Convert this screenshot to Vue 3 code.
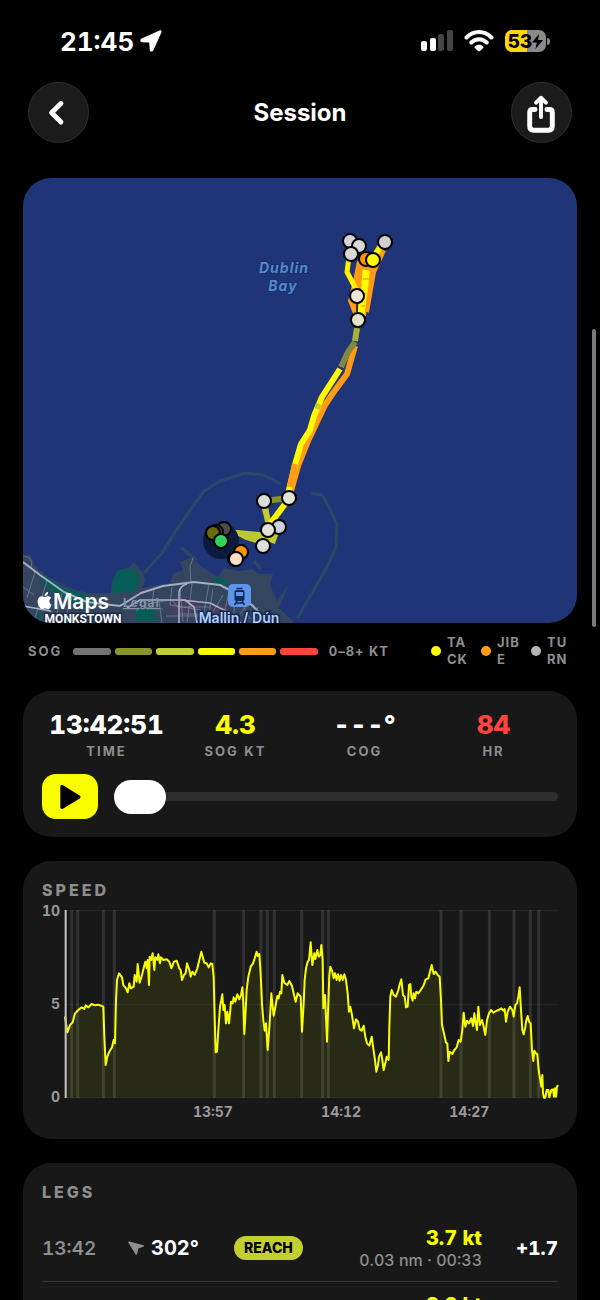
<template>
  <div class="screen">
    <div class="status-bar">
      <div class="clock">
        <span>21:45</span>
        <svg class="icon-location" viewBox="0 0 22 22">
          <path d="M19.600.4 1.600 8.600C-.4 9.600.1 12.200 2 12.300l6.700.2c.5 0 .6.2.6.7l.5 6.700c.2 2 2.800 2.200 3.600.3L21.500 2.300C22 .9 21-.2 19.600.4z" fill="#fff" />
        </svg>
      </div>
      <div class="indicators">
        <svg class="icon-signal" viewBox="0 0 32 22">
          <rect x="0" y="11" width="6" height="10" rx="2" fill="#fff" />
          <rect x="9" y="8" width="6" height="13" rx="2" fill="#fff" />
          <rect x="17" y="4" width="6" height="17" rx="2" fill="#454545" />
          <rect x="26" y="0" width="6" height="21" rx="2" fill="#454545" />
        </svg>
        <svg class="icon-wifi" viewBox="0 0 30 22">
          <path d="M2.500 7.500C9.500.3 20.500.3 27.500 7.500M7.300 12.500c4.400-4.300 11-4.300 15.400 0" fill="none" stroke="#fff" stroke-width="4" stroke-linecap="round" />
          <path d="M10.800 16.400c2.400-2.200 6-2.200 8.400 0 .5.5.5 1 0 1.500l-3.200 3.200c-.6.6-1.400.6-2 0l-3.200-3.200c-.5-.5-.5-1 0-1.500z" fill="#fff" />
        </svg>
        <div class="battery">
          <span class="battery-body">53<svg class="bolt" viewBox="0 0 11 15"><path d="M7 0 0 8.500h4.700L3.500 15 11 6H6z" /></svg></span>
          <span class="battery-cap"></span>
        </div>
      </div>
    </div>

    <header class="nav">
      <button class="round-btn" type="button" aria-label="Back">
        <svg viewBox="0 0 60 60">
          <path d="M32.500 20.800 23 30.200l9.500 9.500" fill="none" stroke="#fff" stroke-width="5" stroke-linecap="round" stroke-linejoin="round" />
        </svg>
      </button>
      <h1>Session</h1>
      <button class="round-btn" type="button" aria-label="Share">
        <svg viewBox="0 0 60 60" fill="none" stroke="#fff" stroke-width="5" stroke-linecap="round" stroke-linejoin="round">
          <path d="M23.500 27H21c-2 0-3 1-3 3v14c0 2.500 1.500 4 4 4h15c2.500 0 4-1.500 4-4V30c0-2-1-3-3-3h-2.500" />
          <path d="M29.500 34.500V17" stroke-width="4" />
          <path d="m24.500 20 5-5 5 5" stroke-width="4" />
        </svg>
      </button>
    </header>

    <main class="content">
      <svg class="map" viewBox="23 178 554 445">
        <rect x="23" y="178" width="554" height="445" fill="#1f3577" />
        <g class="pier">
          <path d="M144 573 162 553 177 529 193 506 204 491 220 481 245 473 263 475 281 484" />
          <path d="M311 493 322 495 329 507 337 524 336 547 327 567 312 593 297 619" />
          <path d="M181 547 196 560M254 561l7 8" />
        </g>
        <path d="M23 556l8-1 4 11 12 10 20 11 20 6h24l1-12 5-10 12-4 5-5 9 11 2 8-3 7 28-5 3-9 10-4-3-8 12-5 10 10 16 10 6-9 15 3 14-2 5 5h15l-3 11 7 16 12-17-10 24 14 13v20H23z" fill="#34455f" />
        <g fill="#075c58">
          <path d="M113 579l7-10 8 1 4-3 5 6 3 7-3 8-5 5-12-1-8 2z" />
          <path d="M42 574l20 13 25 8 8 5-4 6-20-4-22-13-8-8z" />
          <path d="M136 608h19v13h-19zM214 577l14 3v6l-14-4zM37 609l5 14h-5z" />
        </g>
        <path d="M166 600l20-6 16 10-3 12-24 2zM208 610l18-8 5 6-8 7-14 2z" fill="#453f5e" />
        <g fill="none" stroke="#8792ad" stroke-width="1" opacity=".6">
          <path d="M35 572 27 598M47 581 35 618M23 587l11 8M23 606l30 6M62 593l-7 28M72 597l-8 25M23 556c9 0 9 6 8 12M90 606l-3 17M154 589l-2 14 20-3 8 10M159 601l3 22M172 587l-2 18 31 5M145 607l18 2M191 583l-1-16 3-9M192 584l-5 39M179 607h31M209 584l-7 39M213 589l-5 32M223 595l-10 17M230 588l-7 30M236 592l-3 29M180 614h28M166 616h47M240 600l10 19M250 601l-10 13M258 607l-6 13M180 588l3 34M136 611l13-9" />
        </g>
        <g fill="none" stroke="#a4aec5" stroke-linejoin="round">
          <path d="M23 562 40 575 64 592 87 602 120 606 141 593 163 586 194 582 220 585 239 595 252 605 267 621" stroke-width="2" />
          <path d="M23 606l28 5M127 608l13-8h45l9 7 3 16M179 623v-31c1-5 4-7 8-8" stroke-width="1.600" />
          <path d="M181 600 210 603 230 613 241 623" stroke-width="1.400" />
        </g>

        <g class="track">
          <path d="M266 514 264 501 289 498" stroke="#8c912c" />
          <path d="M264 503 269 526" stroke="#c3cc30" />
          <path d="M288 500 270 524" stroke="#f8f500" />
          <path d="M232 531 264 534 273 538 264 544 245 538z" fill="#bdc92f" stroke="#bdc92f" stroke-width="3" />
          <path d="M276 532 272 543" stroke="#c3cc30" />
          <path d="M355 346 347 374 333 393 325 405 308 441 298 466 291 491" stroke="#ff9c13" />
          <path d="M357 328 355 341" stroke="#a7b13a" />
          <path d="M355 342 348 352 341 367" stroke="#7e8840" />
          <path d="M340 369 322 397 314 416 310 430 301 444 296 461 288 494" stroke="#fffb00" />
          <path d="M319 404l-2 5" stroke="#c3cc30" />
          <path d="M295 464 290 487" stroke="#ff9c13" />
          <path d="M357 261h20l-8 28-3 27h-12l-6-15 5-20z" fill="#ff9c13" stroke="none" />
          <path d="M383 250 373 272 366 312" stroke="#ff9c13" />
          <path d="M349 257 347 272 356 289" stroke="#fff200" stroke-width="5" />
          <path d="M382 244 375 255" stroke="#fffb00" />
          <path d="M366 270l-1 16-2 12-2 17" stroke="#fffb00" stroke-width="7" />
          <path d="M363 279h6M361 294h5M361 306h5" stroke="#ffbe0a" stroke-width="2" />
          <path d="M357 303v9" stroke="#27304d" stroke-width="2" />
        </g>

        <circle cx="221" cy="541" r="18" fill="#0c1a3d" />
        <g stroke="#000" stroke-width="2">
          <circle v-for="(p, i) in pins" :key="i" :cx="p.x" :cy="p.y" r="7" :fill="p.color" />
        </g>

        <g class="bay">
          <text x="284" y="273">Dublin</text>
          <text x="283" y="291">Bay</text>
        </g>

        <g transform="translate(228 584)">
          <rect width="23" height="23" rx="5" fill="#5d96e8" />
          <path d="M8.500 4.500h6M9 17l-2.500 4M14 17l2.500 4M8 19h7" fill="none" stroke="#132a5c" stroke-width="1.500" />
          <path d="M8.500 6h6c1.400 0 2 .7 2 2v7c0 1.300-.8 2-2 2h-6c-1.300 0-2-.7-2-2V8c0-1.300.7-2 2-2zM8 8v4h7V8z" fill="#132a5c" fill-rule="evenodd" />
        </g>
        <text class="station" x="239" y="623">Mallin / Dún</text>
        <text class="town" x="83" y="623">MONKSTOWN</text>
        <path transform="translate(36 592) scale(.72)" fill="#fff" d="M12.152 6.896c-.948 0-2.415-1.078-3.960-1.040-2.040.027-3.910 1.183-4.961 3.014-2.117 3.675-.546 9.103 1.519 12.090 1.013 1.454 2.208 3.090 3.792 3.039 1.520-.065 2.090-.987 3.935-.987 1.831 0 2.350.987 3.960.948 1.637-.026 2.676-1.480 3.676-2.948 1.156-1.688 1.636-3.325 1.662-3.415-.039-.013-3.182-1.221-3.220-4.857-.026-3.040 2.480-4.494 2.597-4.559-1.429-2.090-3.623-2.324-4.390-2.376-2-.156-3.675 1.090-4.610 1.090zM15.530 3.830c.843-1.012 1.400-2.427 1.245-3.830-1.207.052-2.662.805-3.532 1.818-.780.896-1.454 2.338-1.273 3.714 1.338.104 2.715-.688 3.559-1.701" />
        <text class="maps" x="53" y="609">Maps</text>
        <a href="#legal"><text class="legal" x="123" y="607">Legal</text></a>
      </svg>

      <div class="legend">
        <span class="unit">SOG</span>
        <div class="scale">
          <i v-for="c in scale" :key="c" :style="{ background: c }"></i>
        </div>
        <span>0–8+ KT</span>
        <ul class="events">
          <li v-for="e in events" :key="e.name">
            <i :style="{ background: e.color }"></i>
            <span>{{ e.name }}</span>
          </li>
        </ul>
      </div>

      <section class="card player">
        <dl class="stats">
          <div v-for="s in stats" :key="s.label">
            <dd :style="{ color: s.color }">{{ s.value }}</dd>
            <dt>{{ s.label }}</dt>
          </div>
        </dl>
        <div class="scrub">
          <button class="play" type="button" aria-label="Play">
            <svg viewBox="0 0 22 26"><path d="M2 3.500v19c0 1.500 1.200 2 2.400 1.300L20 14.300c1-.7 1-1.900 0-2.600L4.400 2.200C3.200 1.500 2 2 2 3.500z" /></svg>
          </button>
          <input v-model="position" type="range" min="0" max="100" aria-label="Playback position" />
        </div>
      </section>

      <section class="card speed">
        <h2>SPEED</h2>
        <div class="chart">
          <div class="y-axis"><span>10</span><span>5</span><span>0</span></div>
          <!-- 0 kt sits at y = 713, 10 kt at y = 152 -->
          <svg class="plot" viewBox="135 150 1479 564" preserveAspectRatio="none">
            <path d="M135 152H1614M135 433H1614M135 713H1614" stroke="#272727" />
            <polygon :points="`135,713 ${trace} 1614,713`" fill="#f8ff00" fill-opacity=".08" />
            <line v-for="x in marks" :key="x" class="mark" :x1="x" :x2="x" y1="150" y2="714" />
            <polyline class="trace" :points="trace" />
            <line class="cursor" x1="137" x2="137" y1="150" y2="714" />
          </svg>
          <div class="x-axis"><span>13:57</span><span>14:12</span><span>14:27</span></div>
        </div>
      </section>

      <section class="card legs">
        <h2>LEGS</h2>
        <ul>
          <li v-for="leg in legs" :key="leg.time">
            <span class="leg-time">{{ leg.time }}</span>
            <span class="leg-course">
              <svg viewBox="0 0 18 16"><path d="M1.500 1.200 16.300 5c1 .3 1 1.400.1 1.700l-5.400 1.800-1.200 5.700c-.2 1-1.400 1.100-1.900.3L.4 2.500C0 1.700.6 1 1.500 1.200z" fill="#8e8e8e" /></svg>
              {{ leg.course }}
            </span>
            <span class="leg-type">{{ leg.type }}</span>
            <span class="leg-speed"><b>{{ leg.speed }}</b><small>{{ leg.detail }}</small></span>
            <span class="leg-delta">{{ leg.delta }}</span>
          </li>
        </ul>
      </section>
    </main>
    <div class="scroll-thumb"></div>
  </div>
</template>

<script setup>
import { ref } from 'vue'

const position = ref(0)

const pins = [
  { x: 350, y: 241, color: '#d3d3dc' },
  { x: 359, y: 246, color: '#d8d8d4' },
  { x: 351, y: 254, color: '#d8d8d6' },
  { x: 385, y: 242, color: '#cfcfcb' },
  { x: 366, y: 259, color: '#ff9408' },
  { x: 373, y: 260, color: '#fffb00' },
  { x: 357, y: 296, color: '#eee5d3' },
  { x: 358, y: 320, color: '#e7e5c8' },
  { x: 289, y: 498, color: '#e4e4d4' },
  { x: 264, y: 501, color: '#dcdedc' },
  { x: 279, y: 527, color: '#ccd0dc' },
  { x: 268, y: 530, color: '#e0e2d6' },
  { x: 263, y: 546, color: '#dcdfdc' },
  { x: 224, y: 529, color: '#4c4e4c' },
  { x: 216, y: 532, color: '#4d4c12' },
  { x: 213, y: 533, color: '#6b6a06' },
  { x: 221, y: 541, color: '#32d35c' },
  { x: 241, y: 552, color: '#ff9408' },
  { x: 235, y: 559, color: '#ffdfc6' },
  { x: 236, y: 559, color: '#ffdfc6' },
]

const scale = ['#747474', '#8a942c', '#c3cf31', '#faff00', '#ff9d14', '#ff453c']

const events = [
  { name: 'TACK', color: '#faff00' },
  { name: 'JIBE', color: '#ff9d14' },
  { name: 'TURN', color: '#b4b4b4' },
]

const stats = [
  { value: '13:42:51', label: 'TIME', color: '#fff' },
  { value: '4.3', label: 'SOG KT', color: '#faff00' },
  { value: '---°', label: 'COG', color: '#fff' },
  { value: '84', label: 'HR', color: '#ff453c' },
]

const marks = [155, 173, 250, 283, 583, 671, 723, 742, 763, 845, 908, 925, 1263, 1323, 1408, 1482, 1531, 1556]

const trace = [
  '135,470 142,517 150,495 158,487 165,460 175,450 185,442 193,447 197,436 205,442 215,432 225,436 235,434 250,440',
  '253,530 257,615 262,590 268,575 276,562 281,540 285,550 288,420 291,360 297,340 306,352 310,375 318,385 323,397',
  '328,370 333,385 341,380 344,345 350,365 353,312 359,368 366,345 372,320 376,305 380,325 383,300 387,375 389,290',
  '393,300 398,280 403,330 406,292 412,300 415,283 420,310 423,292 430,300 440,298 448,305 454,325 462,305 470,302',
  '478,325 482,330 486,360 492,345 497,340 501,310 508,330 512,350 517,335 524,345 532,325 538,300 544,275 548,290',
  '553,308 560,310 566,322 572,310 577,312 581,350 584,470 587,577 591,575 595,510 600,440 607,403 610,450 614,435',
  '618,490 622,455 627,490 631,450 633,425 638,430 641,412 646,425 652,403 658,418 663,405 667,382 670,430 673,522',
  '677,450 680,390 685,350 692,320 699,310 704,295 710,275 713,288 718,282 722,340 726,430 730,480 734,512 738,490',
  '743,570 749,490 754,400 757,430 761,467 767,435 772,408 776,415 780,395 784,400 787,345 793,368 802,375 808,363',
  '816,378 821,400 827,425 833,400 842,410 846,515 851,430 854,360 858,325 863,305 867,300 872,247 877,315 883,280',
  '886,297 892,270 896,290 901,285 904,255 908,300 910,445 915,405 921,545 926,400 928,345 931,320 937,335 941,355',
  '945,340 950,360 954,343 959,362 963,345 968,360 973,343 978,360 983,400 987,455 991,440 996,465 1002,505 1008,478',
  '1014,485 1019,508 1025,512 1031,497 1036,530 1041,550 1048,557 1055,530 1060,565 1065,600 1069,635 1074,615',
  '1077,590 1083,577 1087,600 1091,630 1096,610 1100,590 1106,600 1108,500 1111,410 1115,390 1121,405 1128,410',
  '1135,390 1140,370 1144,358 1149,405 1154,410 1158,442 1163,440 1167,375 1171,372 1174,410 1178,422 1181,400',
  '1185,415 1189,395 1195,400 1202,390 1210,378 1217,358 1225,355 1230,335 1235,315 1241,342 1247,335 1253,345',
  '1259,350 1263,420 1266,495 1273,525 1278,548 1282,550 1285,603 1289,575 1297,582 1303,570 1310,562 1316,540',
  '1322,545 1327,510 1331,458 1336,500 1341,482 1347,490 1354,475 1359,498 1363,460 1368,495 1371,510 1375,440',
  '1380,495 1386,480 1391,500 1396,525 1401,480 1407,460 1413,450 1420,458 1428,453 1436,450 1444,445 1450,452',
  '1454,447 1458,485 1463,455 1470,440 1477,450 1481,470 1486,435 1491,430 1495,410 1499,382 1503,450 1507,510',
  '1511,523 1516,500 1519,480 1523,468 1527,485 1532,490 1536,570 1540,603 1543,572 1548,580 1552,583 1556,630',
  '1560,655 1564,680 1567,645 1569,700 1572,713 1576,713 1580,690 1585,690 1588,712 1594,690 1599,688 1602,710',
  '1605,685 1608,710 1611,680 1614,675',
].join(' ')

const legs = [
  { time: '13:42', course: '302°', type: 'REACH', speed: '3.7 kt', detail: '0.03 nm · 00:33', delta: '+1.7' },
  { time: '13:43', course: '318°', type: 'REACH', speed: '2.6 kt', detail: '0.05 nm · 01:02', delta: '+0.6' },
]
</script>

<style>
body {
  background: #000;
}
</style>

<style scoped>
.screen {
  position: relative;
  height: 100vh;
  overflow: hidden;
  background: #000;
  color: #fff;
  font-family: Inter, "Liberation Sans", sans-serif;
  font-variant-numeric: tabular-nums;
}

h1,
h2,
ul,
dl,
dd {
  margin: 0;
  padding: 0;
  list-style: none;
}

button {
  padding: 0;
  border: 0;
}

.status-bar {
  display: flex;
  align-items: center;
  justify-content: space-between;
  height: 82px;
  padding: 0 50px 0 60px;
}

.clock {
  display: flex;
  align-items: center;
  gap: 6px;
  font-size: 26px;
  font-weight: 700;
}

.icon-location {
  width: 22px;
  height: 22px;
}

.indicators {
  display: flex;
  align-items: center;
  gap: 11px;
}

.icon-signal {
  width: 32px;
  height: 22px;
}

.icon-wifi {
  width: 30px;
  height: 22px;
}

.battery {
  display: flex;
  align-items: center;
  gap: 1px;
}

.battery-body {
  display: flex;
  align-items: center;
  justify-content: center;
  width: 41px;
  height: 22px;
  border-radius: 7px;
  background: linear-gradient(90deg, #ffd60a 54%, #8a8a8a 54%);
  color: #000;
  font-size: 19px;
  font-weight: 800;
}

.bolt {
  width: 11px;
  height: 15px;
}

.battery-cap {
  width: 3px;
  height: 7px;
  border-radius: 0 3px 3px 0;
  background: #8a8a8a;
}

.nav {
  display: flex;
  align-items: center;
  justify-content: space-between;
  padding: 0 28px;
}

.nav h1 {
  font-size: 24px;
  font-weight: 700;
}

.round-btn {
  width: 61px;
  height: 61px;
  border: 1px solid #2f2f2f;
  border-radius: 50%;
  background: #1b1b1b;
}

.round-btn svg {
  display: block;
}

.content {
  padding: 35px 23px 0;
}

.map {
  display: block;
  width: 100%;
  border-radius: 28px;
}

.pier path {
  fill: none;
  stroke: #294966;
  stroke-width: 3;
}

.track {
  fill: none;
  stroke-width: 6;
  stroke-linejoin: round;
}

.bay {
  fill: #5588cd;
  stroke: #15306b;
  stroke-width: 2px;
  paint-order: stroke;
  font-size: 14px;
  font-style: italic;
  font-weight: 700;
  letter-spacing: 1px;
  text-anchor: middle;
}

.station {
  fill: #b0d0ff;
  stroke: #15264e;
  stroke-width: 3px;
  paint-order: stroke;
  font-size: 14px;
  font-weight: 600;
  text-anchor: middle;
}

.town {
  fill: #fff;
  stroke: #1f2c45;
  stroke-width: 3px;
  paint-order: stroke;
  font-family: Roboto, "Liberation Sans", sans-serif;
  font-size: 12px;
  font-weight: 700;
  text-anchor: middle;
}

.maps {
  fill: #fff;
  font-size: 21px;
  font-weight: 600;
}

.legal {
  fill: #8793a5;
  font-size: 12px;
  font-weight: 700;
  letter-spacing: 1px;
  text-decoration: underline;
}

.legend {
  display: flex;
  align-items: center;
  height: 34px;
  margin: 11px 0 23px;
  padding: 0 5px;
  color: #8e8e8e;
  font-size: 13px;
  font-weight: 700;
  letter-spacing: 1px;
  line-height: 17px;
}

.unit {
  letter-spacing: 2px;
}

.scale {
  display: flex;
  flex: 1;
  gap: 4px;
  margin: 0 11px;
}

.scale i {
  flex: 1;
  height: 7px;
  border-radius: 3px;
}

.events {
  display: flex;
  gap: 9px;
  margin-left: 42px;
}

.events li {
  display: flex;
  align-items: center;
  gap: 6px;
}

.events i {
  width: 10px;
  height: 10px;
  border-radius: 50%;
}

.events span {
  width: 25px;
  word-break: break-all;
}

.card {
  margin-bottom: 24px;
  padding: 18px 19px;
  border-radius: 28px;
  background: #181818;
}

.stats {
  display: grid;
  grid-template-columns: repeat(4, 1fr);
  text-align: center;
}

.stats div {
  display: flex;
  flex-direction: column;
}

.stats dd {
  font-size: 26px;
  font-weight: 800;
  line-height: 32px;
}

.stats dt {
  color: #8e8e8e;
  font-size: 13px;
  font-weight: 700;
  letter-spacing: 2px;
  line-height: 20px;
}

.scrub {
  display: flex;
  align-items: center;
  gap: 16px;
  margin-top: 13px;
}

.play {
  display: flex;
  align-items: center;
  justify-content: center;
  width: 56px;
  height: 45px;
  border-radius: 14px;
  background: #faff00;
}

.play svg {
  width: 24px;
  height: 28px;
}

.scrub input {
  flex: 1;
  height: 34px;
  margin: 0;
  appearance: none;
  background: transparent;
}

.scrub input::-webkit-slider-runnable-track {
  height: 9px;
  border-radius: 5px;
  background: #2d2d2d;
}

.scrub input::-webkit-slider-thumb {
  width: 52px;
  height: 34px;
  margin-top: -12px;
  border-radius: 17px;
  appearance: none;
  background: #fff;
}

h2 {
  color: #8e8e8e;
  font-size: 16px;
  font-weight: 800;
  letter-spacing: 3px;
  line-height: 22px;
}

.chart {
  display: grid;
  grid-template-columns: 18px 1fr;
  gap: 5px;
  margin-top: 9px;
  color: #9a9a9a;
  font-size: 14px;
  font-weight: 700;
  line-height: 18px;
}

.y-axis {
  display: flex;
  flex-direction: column;
  justify-content: space-between;
  margin: -8px 0;
  text-align: right;
}

.plot {
  display: block;
  width: 100%;
  height: 188px;
  overflow: visible;
}

.plot path,
.plot line,
.plot polyline {
  vector-effect: non-scaling-stroke;
}

.mark {
  stroke: #fff;
  stroke-opacity: 0.11;
  stroke-width: 3;
}

.trace {
  fill: none;
  stroke: #faff00;
  stroke-width: 2;
  stroke-linejoin: round;
}

.cursor {
  stroke: #c4c4c4;
  stroke-width: 2;
}

.x-axis {
  display: grid;
  grid-column: 2;
  grid-template-columns: repeat(3, 1fr);
  padding: 0 5% 0 17%;
  text-align: center;
}

.legs li {
  display: flex;
  align-items: center;
  height: 66px;
  border-bottom: 1px solid #343434;
}

.legs ul {
  padding-top: 12px;
}

.leg-time {
  width: 86px;
  color: #8e8e8e;
  font-size: 19px;
  font-weight: 600;
}

.leg-course {
  display: flex;
  align-items: center;
  gap: 6px;
  width: 106px;
  font-size: 20px;
  font-weight: 700;
}

.leg-course svg {
  width: 17px;
  height: 16px;
}

.leg-type {
  padding: 0 10px;
  border-radius: 12px;
  background: #c3cf31;
  color: #000;
  font-size: 14px;
  font-weight: 800;
  line-height: 24px;
}

.leg-speed {
  display: flex;
  flex: 1;
  flex-direction: column;
  align-items: flex-end;
}

.leg-speed b {
  color: #faff00;
  font-size: 20px;
  font-weight: 800;
  line-height: 24px;
}

.leg-speed small {
  color: #8e8e8e;
  font-size: 16px;
  font-weight: 500;
  line-height: 20px;
}

.leg-delta {
  width: 76px;
  font-size: 19px;
  font-weight: 800;
  text-align: right;
}

.scroll-thumb {
  position: absolute;
  top: 329px;
  right: 4px;
  width: 4px;
  height: 298px;
  border-radius: 2px;
  background: #7a7a7a;
}
</style>
